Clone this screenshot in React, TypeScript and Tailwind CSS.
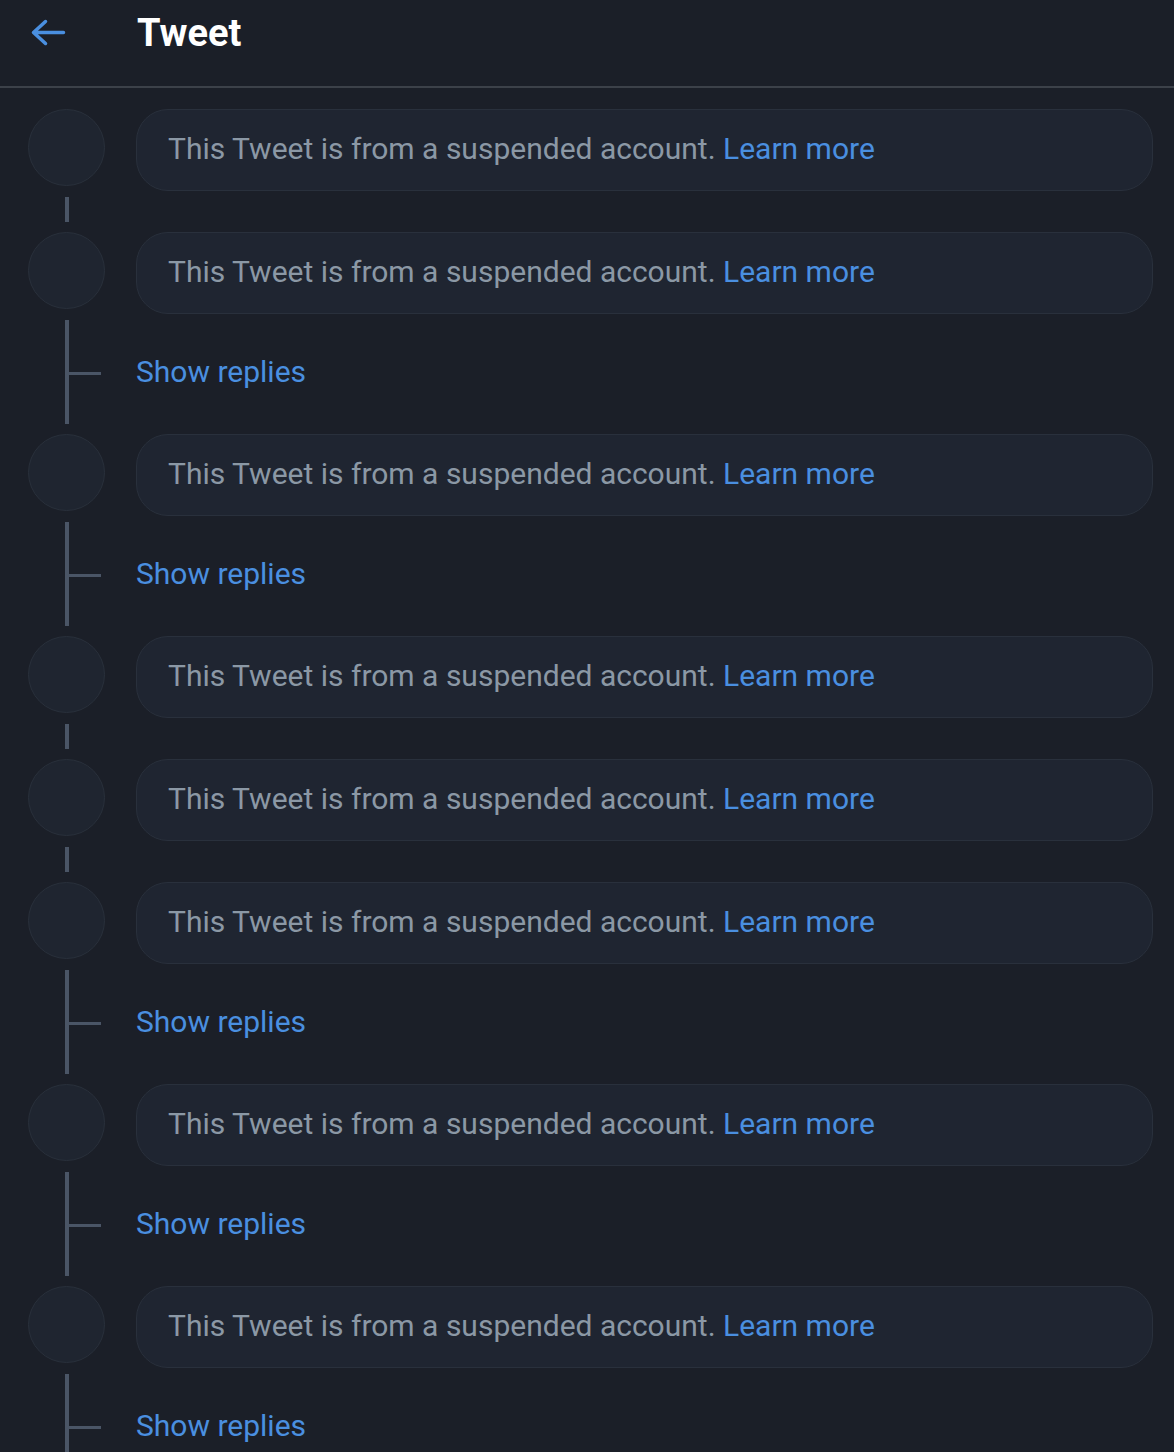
const rows: ('link' | 'replies')[] = [
  'link',
  'replies',
  'replies',
  'link',
  'link',
  'replies',
  'replies',
  'replies',
];

function Suspended() {
  return (
    <div className="flex h-[82px]">
      <div className="w-[136px] shrink-0 pl-[28px]">
        <div className="w-[77px] h-[77px] rounded-full bg-[#1f2530] border border-[#29303b]" />
      </div>
      <div className="flex-1 mr-[21px] h-[82px] rounded-[32px] bg-[#1f2531] border border-[#29303c] flex items-center pl-[31px] pb-[3px] text-[30px] text-[#8b98a5]">
        <span>
          This Tweet is from a suspended account.{' '}
          <span className="text-[#4a8fe0]">Learn more</span>
        </span>
      </div>
    </div>
  );
}

function Link() {
  return (
    <div className="h-[41px] w-[136px] pl-[65px] pt-[6px]">
      <div className="w-[4px] h-[25px] bg-[#4a5566]" />
    </div>
  );
}

function ShowReplies() {
  return (
    <div className="flex h-[120px]">
      <div className="w-[136px] shrink-0 pl-[65px] pt-[6px] flex">
        <div className="w-[4px] h-[104px] bg-[#4a5566]" />
        <div className="w-[32px] h-[3px] mt-[52px] bg-[#4a5566]" />
      </div>
      <div className="flex items-center text-[30px] text-[#4a8fe0] pb-[6px]">
        Show replies
      </div>
    </div>
  );
}

export default function App() {
  return (
    <div
      className="w-[1174px] h-[1452px] overflow-hidden bg-[#1b1f28]"
      style={{ fontFamily: 'Roboto, "Liberation Sans", sans-serif' }}
    >
      <div className="h-[88px] border-b-2 border-[#3c4149]">
        <div className="h-[66px] flex items-center">
          <div className="w-[137px] pl-[31px]">
            <svg width="36" height="28" viewBox="0 0 36 28" fill="none">
              <path
                d="M14.5 2.5L2.5 13.5L14.5 24.5M2.5 13.5H32.5"
                stroke="#4a8fe0"
                strokeWidth="3.5"
                strokeLinecap="round"
                strokeLinejoin="round"
              />
            </svg>
          </div>
          <h1 className="text-[38px] font-bold text-white">Tweet</h1>
        </div>
      </div>

      <div className="pt-[21px]">
        {rows.map((r, i) => (
          <div key={i}>
            <Suspended />
            {r === 'link' ? <Link /> : <ShowReplies />}
          </div>
        ))}
      </div>
    </div>
  );
}
